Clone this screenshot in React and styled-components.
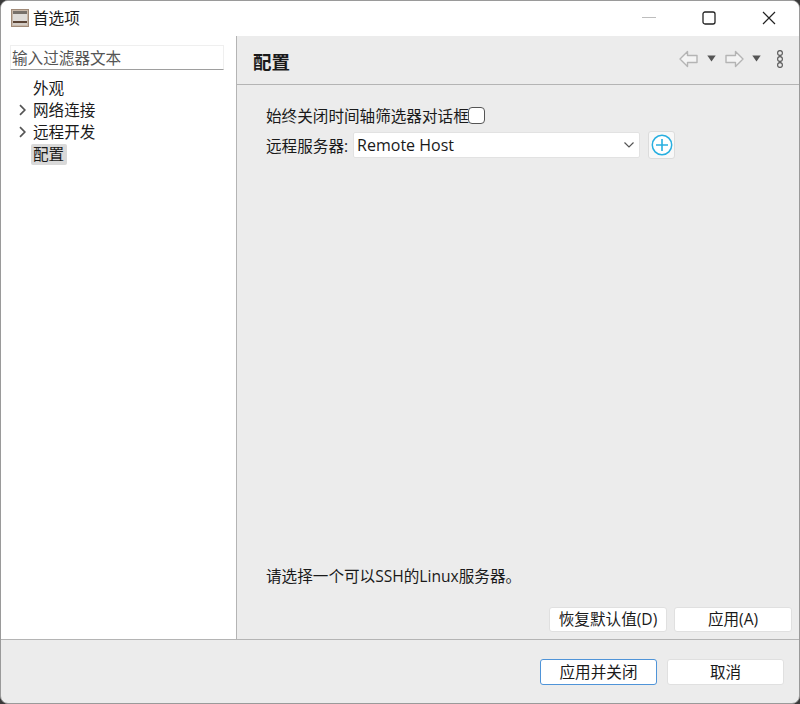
import React from "react";
import styled, { createGlobalStyle } from "styled-components";

const Global = createGlobalStyle`
  html, body { margin: 0; padding: 0; background: #3a3a3a; }
  body {
    font-family: "Open Sans", "Noto Sans CJK SC", sans-serif;
    font-size: 15.6px;
    color: #1a1a1a;
  }
`;

const Dialog = styled.div`
  width: 800px;
  height: 704px;
  box-sizing: border-box;
  display: flex;
  flex-direction: column;
  background: #ececec;
  border: 1px solid #9a9a9a;
  border-radius: 8px;
  overflow: hidden;
`;

const TitleBar = styled.div`
  height: 35px;
  flex: none;
  box-sizing: border-box;
  display: flex;
  align-items: center;
  background: #fff;
  padding: 0 0 1px 10px;
`;

const TitleText = styled.span`
  margin-left: 4px;
  line-height: 20px;
`;

const WinButtons = styled.div`
  margin-left: auto;
  display: flex;
  align-items: center;
`;

const WinButton = styled.div`
  width: 60px;
  height: 34px;
  display: flex;
  align-items: center;
  justify-content: center;
`;

const Body = styled.div`
  flex: 1;
  min-height: 0;
  display: flex;
  border-bottom: 1px solid #b4b4b4;
`;

const Sidebar = styled.div`
  width: 236px;
  flex: none;
  box-sizing: border-box;
  background: #fff;
  border-right: 1px solid #b4b4b4;
  padding: 9px 12px 0 9px;
`;

const FilterInput = styled.div`
  height: 25px;
  box-sizing: border-box;
  border: 1px solid #efefef;
  border-bottom: 1px solid #9e9e9e;
  padding-left: 1px;
  color: #555;
  line-height: 25px;
  white-space: nowrap;
`;

const Tree = styled.div`
  margin-top: 7px;
  display: flex;
  flex-direction: column;
`;

const TreeRow = styled.div`
  height: 22px;
  display: flex;
  align-items: center;
`;

const Twisty = styled.div`
  width: 14px;
  flex: none;
  padding-left: 9px;
  display: flex;
`;

const TreeLabel = styled.span`
  line-height: 21px;
  padding: 0 3px 0 ${(p) => (p.$selected ? "2px" : "0")};
  margin-left: ${(p) => (p.$selected ? "-2px" : "0")};
  background: ${(p) => (p.$selected ? "#d9d9d9" : "transparent")};
  border-radius: 2px;
`;

const Main = styled.div`
  flex: 1;
  min-width: 0;
  display: flex;
  flex-direction: column;
`;

const PageHeader = styled.div`
  height: 49px;
  flex: none;
  box-sizing: border-box;
  display: flex;
  align-items: center;
  padding: 4px 16px 0 16px;
  border-bottom: 1px solid #b4b4b4;
`;

const PageTitle = styled.h1`
  margin: 0;
  font-size: 18.5px;
  font-weight: 700;
  line-height: 24px;
`;

const HeaderTools = styled.div`
  margin-left: auto;
  display: flex;
  align-items: center;
  margin-top: -7px;
`;

const ToolSlot = styled.div`
  display: flex;
  margin-left: ${(p) => p.$gap || 0}px;
`;

const Content = styled.div`
  flex: 1;
  min-height: 0;
  display: flex;
  flex-direction: column;
  padding: 19px 7px 7px 29px;
`;

const FormRow = styled.div`
  display: flex;
  align-items: center;
  height: 22px;
`;

const ServerRow = styled(FormRow)`
  height: 28px;
  margin-top: 5px;
`;

const Checkbox = styled.div`
  width: 15px;
  height: 15px;
  margin-left: -1px;
  border: 1px solid #555;
  border-radius: 4px;
  background: #fff;
`;

const Select = styled.div`
  width: 287px;
  height: 26px;
  box-sizing: border-box;
  margin-left: 5px;
  display: flex;
  align-items: center;
  justify-content: space-between;
  padding: 0 5px 0 3px;
  background: #fff;
  border: 1px solid #e2e2e2;
  border-radius: 2px;
  font-size: 16px;
`;

const AddButton = styled.div`
  width: 27px;
  height: 28px;
  box-sizing: border-box;
  margin-left: 8px;
  display: flex;
  align-items: center;
  justify-content: center;
  background: #f8f8f8;
  border: 1px solid #dcdcdc;
  border-radius: 3px;
`;

const Hint = styled.div`
  margin-top: auto;
  line-height: 22px;
`;

const Actions = styled.div`
  display: flex;
  justify-content: flex-end;
  gap: 7px;
  margin-top: 20px;
`;

const Footer = styled.div`
  height: 63px;
  flex: none;
  box-sizing: border-box;
  display: flex;
  justify-content: flex-end;
  gap: 10px;
  padding: 19px 15px 0 0;
`;

const Button = styled.button`
  width: ${(p) => p.$width}px;
  height: ${(p) => p.$height}px;
  padding: 0 0 ${(p) => (p.$height === 25 ? 2 : 0)}px;
  box-sizing: border-box;
  background: #fff;
  border: 1px solid ${(p) => (p.$primary ? "#4f94d8" : "#e0e0e0")};
  border-radius: 3px;
  font: inherit;
  line-height: 22px;
  color: #1a1a1a;
`;

const AppIcon = () => (
  <svg width="18" height="18" viewBox="0 0 18 18">
    <rect x="0.5" y="0.5" width="17" height="17" fill="#c8b8aa" stroke="#a08a78" />
    <rect x="2" y="2" width="14" height="3" fill="#77706a" />
    <rect x="2" y="5" width="14" height="7" fill="#dedbd8" />
    <rect x="2" y="12" width="14" height="2" fill="#5b4436" />
    <rect x="2" y="14" width="14" height="2" fill="#d2cbc4" />
  </svg>
);

const Chevron = () => (
  <svg width="7" height="12" viewBox="0 0 7 12">
    <path d="M1 1.2 L5.8 6 L1 10.8" fill="none" stroke="#555" strokeWidth="1.7" />
  </svg>
);

const ArrowLeft = () => (
  <svg width="19" height="18" viewBox="0 0 19 18">
    <path d="M1 9 L8.5 1.5 V5.5 H18 V12.5 H8.5 V16.5 Z" fill="#f4f4f4" stroke="#b4b4b4" strokeWidth="1.4" strokeLinejoin="round" />
  </svg>
);

const ArrowRight = () => (
  <svg width="19" height="18" viewBox="0 0 19 18">
    <path d="M18 9 L10.5 1.5 V5.5 H1 V12.5 H10.5 V16.5 Z" fill="#f4f4f4" stroke="#b4b4b4" strokeWidth="1.4" strokeLinejoin="round" />
  </svg>
);

const Caret = () => (
  <svg width="9" height="7" viewBox="0 0 9 7">
    <path d="M0.3 0.5 H8.7 L4.5 6.5 Z" fill="#555" />
  </svg>
);

const MoreDots = () => (
  <svg width="6" height="18" viewBox="0 0 6 18">
    <g fill="none" stroke="#555" strokeWidth="1.1">
      <circle cx="3" cy="3" r="2.4" />
      <circle cx="3" cy="9" r="2.4" />
      <circle cx="3" cy="15" r="2.4" />
    </g>
  </svg>
);

export default function App() {
  return (
    <>
      <Global />
      <Dialog>
        <TitleBar>
          <AppIcon />
          <TitleText>首选项</TitleText>
          <WinButtons>
            <WinButton>
              <svg width="14" height="2" viewBox="0 0 14 2">
                <rect width="14" height="1" fill="#bdbdbd" />
              </svg>
            </WinButton>
            <WinButton>
              <svg width="14" height="14" viewBox="0 0 14 14">
                <rect x="1" y="1" width="12" height="12" rx="2" fill="none" stroke="#222" strokeWidth="1.3" />
              </svg>
            </WinButton>
            <WinButton>
              <svg width="14" height="14" viewBox="0 0 14 14">
                <path d="M1 1 L13 13 M13 1 L1 13" stroke="#222" strokeWidth="1.2" />
              </svg>
            </WinButton>
          </WinButtons>
        </TitleBar>
        <Body>
          <Sidebar>
            <FilterInput>输入过滤器文本</FilterInput>
            <Tree>
              <TreeRow>
                <Twisty />
                <TreeLabel>外观</TreeLabel>
              </TreeRow>
              <TreeRow>
                <Twisty>
                  <Chevron />
                </Twisty>
                <TreeLabel>网络连接</TreeLabel>
              </TreeRow>
              <TreeRow>
                <Twisty>
                  <Chevron />
                </Twisty>
                <TreeLabel>远程开发</TreeLabel>
              </TreeRow>
              <TreeRow>
                <Twisty />
                <TreeLabel $selected>配置</TreeLabel>
              </TreeRow>
            </Tree>
          </Sidebar>
          <Main>
            <PageHeader>
              <PageTitle>配置</PageTitle>
              <HeaderTools>
                <ToolSlot><ArrowLeft /></ToolSlot>
                <ToolSlot $gap={9}><Caret /></ToolSlot>
                <ToolSlot $gap={9}><ArrowRight /></ToolSlot>
                <ToolSlot $gap={8}><Caret /></ToolSlot>
                <ToolSlot $gap={16}><MoreDots /></ToolSlot>
              </HeaderTools>
            </PageHeader>
            <Content>
              <FormRow>
                始终关闭时间轴筛选器对话框
                <Checkbox />
              </FormRow>
              <ServerRow>
                远程服务器:
                <Select>
                  Remote Host
                  <svg width="10" height="6" viewBox="0 0 10 6">
                    <path d="M0.5 0.5 L5 5 L9.5 0.5" fill="none" stroke="#555" strokeWidth="1.2" />
                  </svg>
                </Select>
                <AddButton>
                  <svg width="22" height="22" viewBox="0 0 22 22">
                    <circle cx="11" cy="11" r="9.7" fill="#fff" stroke="#28afe0" strokeWidth="1.5" />
                    <path d="M11 5 V17 M5 11 H17" stroke="#28afe0" strokeWidth="1.6" />
                  </svg>
                </AddButton>
              </ServerRow>
              <Hint>请选择一个可以SSH的Linux服务器。</Hint>
              <Actions>
                <Button $width={118} $height={25}>恢复默认值(D)</Button>
                <Button $width={118} $height={25}>应用(A)</Button>
              </Actions>
            </Content>
          </Main>
        </Body>
        <Footer>
          <Button $width={117} $height={26} $primary>应用并关闭</Button>
          <Button $width={117} $height={26}>取消</Button>
        </Footer>
      </Dialog>
    </>
  );
}
